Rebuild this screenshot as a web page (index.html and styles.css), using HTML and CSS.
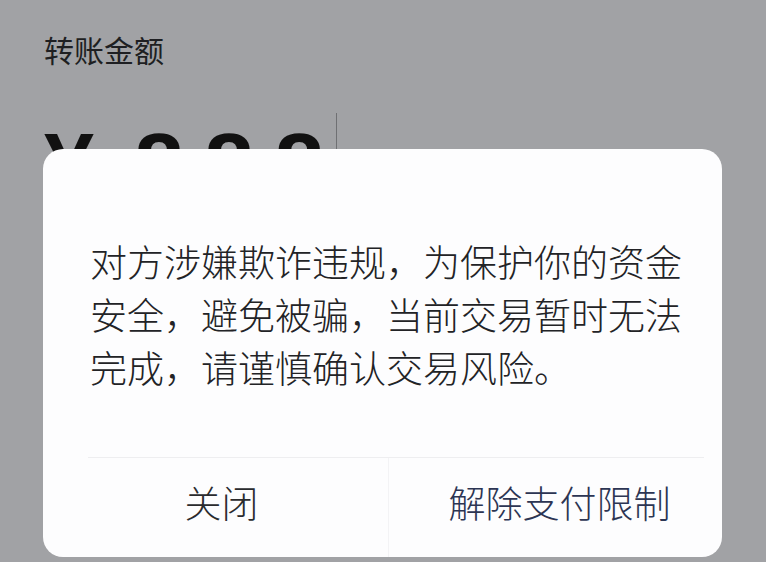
FILE: index.html
```html
<!DOCTYPE html>
<html lang="zh-CN">
<head>
<meta charset="utf-8">
<link rel="stylesheet" href="styles.css">
</head>
<body>
<div class="page">
  <div class="label">转账金额</div>
  <div class="amount-row">
    <span class="amount">¥<span class="digits">888</span></span>
    <span class="cursor"></span>
  </div>
</div>
<div class="dialog">
  <div class="message">对方涉嫌欺诈违规，为保护你的资金安全，避免被骗，当前交易暂时无法完成，请谨慎确认交易风险。</div>
  <div class="actions">
    <div class="btn btn-close">关闭</div>
    <div class="btn btn-unlock">解除支付限制</div>
  </div>
</div>
</body>
</html>
```
FILE: styles.css
```css
html, body {
  margin: 0;
  padding: 0;
}
body {
  width: 766px;
  height: 562px;
  background: #a1a2a5;
  font-family: "Noto Sans CJK SC", "Noto Sans", sans-serif;
  overflow: hidden;
  position: relative;
}
.page {
  padding: 30px 0 0 44px;
}
.label {
  font-size: 30px;
  line-height: 38px;
  color: #1e1f22;
}
.amount-row {
  display: flex;
  align-items: flex-start;
  margin-top: 45px;
}
.amount {
  font-family: "Liberation Sans", Arial, sans-serif;
  font-weight: bold;
  font-size: 90px;
  line-height: 90px;
  color: #111;
  margin-top: 8px;
}
.digits {
  margin-left: 40px;
  letter-spacing: 20px;
}
.cursor {
  width: 1px;
  height: 36px;
  background: #6f7073;
  margin-left: -8px;
}
.dialog {
  position: absolute;
  left: 43px;
  top: 149px;
  width: 679px;
  height: 408px;
  background: #fdfdfe;
  border-radius: 20px;
  display: flex;
  flex-direction: column;
}
.message {
  height: 309px;
  box-sizing: border-box;
  margin: 0 18px 0 45px;
  padding: 86px 0 0 2px;
  font-size: 37px;
  font-weight: 300;
  line-height: 53px;
  color: #222326;
  border-bottom: 1px solid #eeeef0;
}
.actions {
  flex: 1;
  display: flex;
}
.btn {
  display: flex;
  align-items: center;
  justify-content: center;
  font-size: 37px;
  font-weight: 300;
  padding-bottom: 12px;
}
.btn-close {
  width: 346px;
  color: #2a2b2e;
  border-right: 1px solid #f3f3f5;
  box-sizing: border-box;
  padding-left: 12px;
}
.btn-unlock {
  flex: 1;
  color: #2c3553;
  padding-left: 8px;
}
```
